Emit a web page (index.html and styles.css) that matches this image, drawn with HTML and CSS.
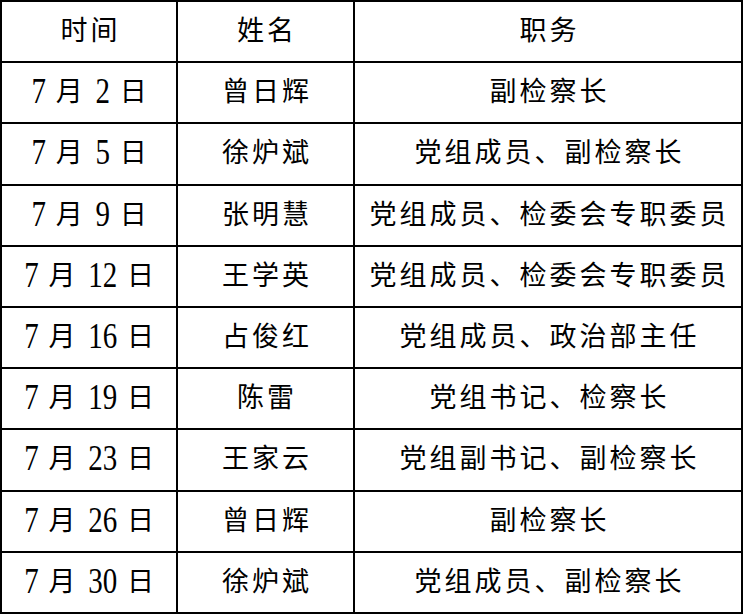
FILE: index.html
```html
<!DOCTYPE html>
<html lang="zh-CN">
<head>
<meta charset="utf-8">
<title>值班表</title>
<link rel="stylesheet" href="styles.css">
</head>
<body>
<div class="table">
  <div class="cell">时间</div><div class="cell">姓名</div><div class="cell">职务</div>
  <div class="cell"><span class="n">7</span> 月 <span class="n">2</span> 日</div><div class="cell">曾日辉</div><div class="cell">副检察长</div>
  <div class="cell"><span class="n">7</span> 月 <span class="n">5</span> 日</div><div class="cell">徐炉斌</div><div class="cell">党组成员、副检察长</div>
  <div class="cell"><span class="n">7</span> 月 <span class="n">9</span> 日</div><div class="cell">张明慧</div><div class="cell">党组成员、检委会专职委员</div>
  <div class="cell"><span class="n">7</span> 月 <span class="n">12</span> 日</div><div class="cell">王学英</div><div class="cell">党组成员、检委会专职委员</div>
  <div class="cell"><span class="n">7</span> 月 <span class="n">16</span> 日</div><div class="cell">占俊红</div><div class="cell">党组成员、政治部主任</div>
  <div class="cell"><span class="n">7</span> 月 <span class="n">19</span> 日</div><div class="cell">陈雷</div><div class="cell">党组书记、检察长</div>
  <div class="cell"><span class="n">7</span> 月 <span class="n">23</span> 日</div><div class="cell">王家云</div><div class="cell">党组副书记、副检察长</div>
  <div class="cell"><span class="n">7</span> 月 <span class="n">26</span> 日</div><div class="cell">曾日辉</div><div class="cell">副检察长</div>
  <div class="cell"><span class="n">7</span> 月 <span class="n">30</span> 日</div><div class="cell">徐炉斌</div><div class="cell">党组成员、副检察长</div>
</div>
</body>
</html>
```
FILE: styles.css
```css
html, body {
  margin: 0;
  padding: 0;
  background: #fff;
}
.table {
  width: 743px;
  height: 614px;
  box-sizing: border-box;
  display: grid;
  grid-template-columns: 176px 177px 388px;
  grid-template-rows: repeat(10, 61.2px);
  border-right: 2px solid #000;
  border-bottom: 2px solid #000;
  font-family: "Liberation Serif", "Noto Sans CJK SC", serif;
  font-size: 27px;
  color: #000;
}
.cell {
  box-sizing: border-box;
  border-left: 2px solid #000;
  border-top: 2px solid #000;
  text-align: center;
  line-height: 58px;
  letter-spacing: 3px;
  padding-left: 3px;
  white-space: nowrap;
  overflow: hidden;
}
.n {
  display: inline-block;
  font-family: "Liberation Serif", serif;
  font-size: 29px;
  letter-spacing: 0;
  line-height: 1;
  transform: scaleY(1.2);
}
```
